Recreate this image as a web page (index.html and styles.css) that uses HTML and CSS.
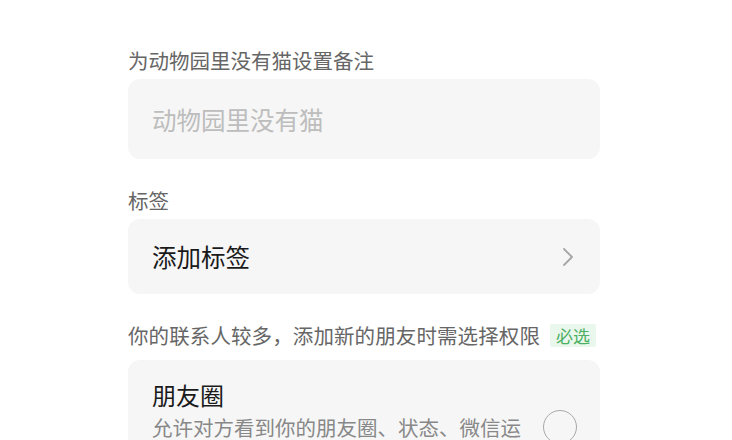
FILE: index.html
```
<!DOCTYPE html>
<html lang="zh-CN">
<head>
    <meta charset="UTF-8">
    <title>设置备注和标签</title>
    <link rel="stylesheet" href="styles.css">
</head>
<body>
<div class="page">
    <div class="section">
        <div class="label">为动物园里没有猫设置备注</div>
        <div class="card input_card">
            <input type="text" class="remark_input" placeholder="动物园里没有猫">
        </div>
    </div>

    <div class="section">
        <div class="label">标签</div>
        <div class="card tag_card">
            <span class="tag_text">添加标签</span>
            <svg class="arrow" width="12" height="20" viewBox="0 0 12 20">
                <path d="M2 2 L10 10 L2 18" fill="none" stroke="#a6a6a6" stroke-width="1.8" stroke-linecap="round" stroke-linejoin="round"/>
            </svg>
        </div>
    </div>

    <div class="section">
        <div class="label label_row">
            <span>你的联系人较多，添加新的朋友时需选择权限</span>
            <span class="badge">必选</span>
        </div>
        <div class="card option_card">
            <div class="option_text">
                <div class="option_title">朋友圈</div>
                <div class="option_desc">允许对方看到你的朋友圈、状态、微信运动等</div>
            </div>
            <span class="radio"></span>
        </div>
    </div>
</div>
</body>
</html>
```

FILE: styles.css
```
* {
    box-sizing: border-box;
}

body {
    margin: 0;
    background-color: #ffffff;
    font-family: "Noto Sans CJK SC", "Noto Sans", sans-serif;
}

.page {
    width: 472px;
    margin-left: 128px;
    padding-top: 48px;
    display: flex;
    flex-direction: column;
    gap: 29px;
}

.label {
    font-size: 20.5px;
    line-height: 24px;
    color: #666666;
    margin-bottom: 7px;
}

.label_row {
    display: flex;
    align-items: center;
    gap: 10px;
    margin-bottom: 13px;
    letter-spacing: 0.1px;
}

.badge {
    font-size: 17px;
    line-height: 23px;
    padding: 0 6px;
    color: #4caf62;
    background-color: #e9f7ec;
    border-radius: 2px;
    letter-spacing: 0;
}

.card {
    background-color: #f6f6f6;
    border-radius: 12px;
}

.input_card {
    height: 80px;
    display: flex;
    align-items: center;
    padding: 0 24px;
}

.remark_input {
    width: 100%;
    border: none;
    outline: none;
    background: transparent;
    font-family: inherit;
    font-size: 24.5px;
    color: #1a1a1a;
    padding: 0;
}

.remark_input::placeholder {
    color: #bdbdbd;
}

.tag_card {
    height: 75px;
    display: flex;
    align-items: center;
    justify-content: space-between;
    padding: 0 26px 0 24px;
}

.tag_text {
    font-size: 24.5px;
    color: #1a1a1a;
}

.option_card {
    display: flex;
    align-items: center;
    padding: 19px 23px 19px 24px;
}

.option_text {
    width: 378px;
}

.option_title {
    font-size: 24px;
    line-height: 32px;
    color: #1a1a1a;
}

.option_desc {
    font-size: 20.5px;
    line-height: 32px;
    color: #888888;
}

.radio {
    width: 34px;
    height: 34px;
    margin-left: auto;
    border: 1.6px solid #a9a9a9;
    border-radius: 50%;
}
```
